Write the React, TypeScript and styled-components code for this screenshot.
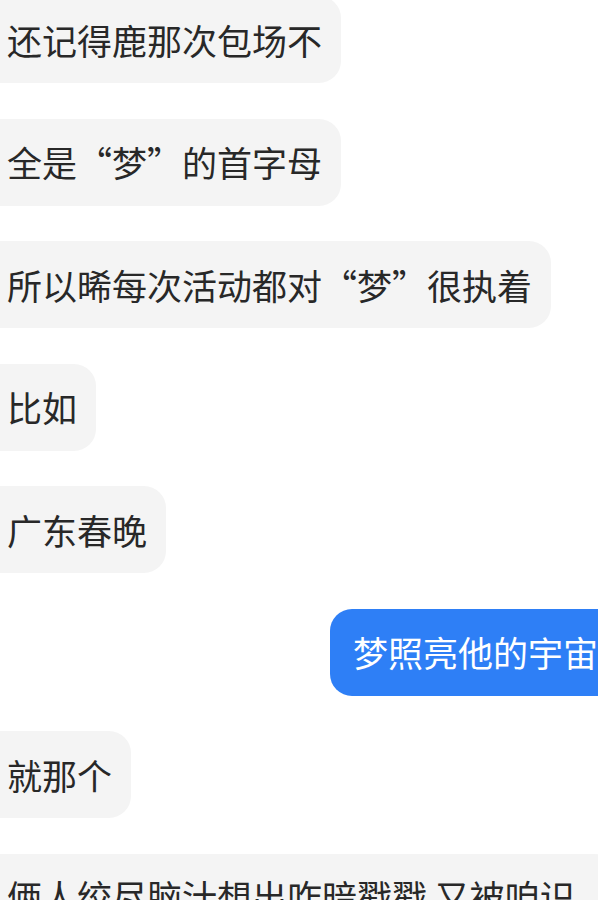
import React from "react"
import styled, { createGlobalStyle } from "styled-components"

const GlobalStyle = createGlobalStyle`
  html, body {
    margin: 0;
    padding: 0;
    background: #fff;
    overflow: hidden;
  }
  body {
    font-family: "Noto Sans CJK SC", "Noto Sans", sans-serif;
  }
`

const Thread = styled.div`
  display: flex;
  flex-direction: column;
  gap: 35.5px;
  margin-top: -4px;
  width: 598px;
  height: 904px;
  overflow: hidden;
`

const Row = styled.div<{ $mine?: boolean }>`
  display: flex;
  justify-content: ${p => (p.$mine ? "flex-end" : "flex-start")};
`

const Bubble = styled.div<{ $mine?: boolean }>`
  box-sizing: border-box;
  min-height: 87px;
  display: flex;
  align-items: center;
  flex-shrink: 0;
  font-size: 35px;
  line-height: 44px;
  white-space: pre-wrap;
  border-radius: 22px;
  background: ${p => (p.$mine ? "#2e7ff6" : "#f4f4f4")};
  color: ${p => (p.$mine ? "#fff" : "#282828")};
  padding: ${p => (p.$mine ? "20px 30px 20px 23px" : "20px 19px 20px 31px")};
  margin: ${p => (p.$mine ? "0 -30px 0 0" : "0 0 0 -24px")};
  max-width: ${p => (p.$mine ? "none" : "640px")};
`

const messages: { text: string; mine?: boolean }[] = [
  { text: "还记得鹿那次包场不" },
  { text: "全是“梦”的首字母" },
  { text: "所以晞每次活动都对“梦”很执着" },
  { text: "比如" },
  { text: "广东春晚" },
  { text: "梦照亮他的宇宙", mine: true },
  { text: "就那个" },
  { text: "俩人绞尽脑汁想出咋暗戳戳 又被咱识破" },
]

const App = () => {
  return (
    <>
      <GlobalStyle />
      <Thread>
        {messages.map((m, i) => (
          <Row key={i} $mine={m.mine}>
            <Bubble $mine={m.mine}>{m.text}</Bubble>
          </Row>
        ))}
      </Thread>
    </>
  )
}

export default App
